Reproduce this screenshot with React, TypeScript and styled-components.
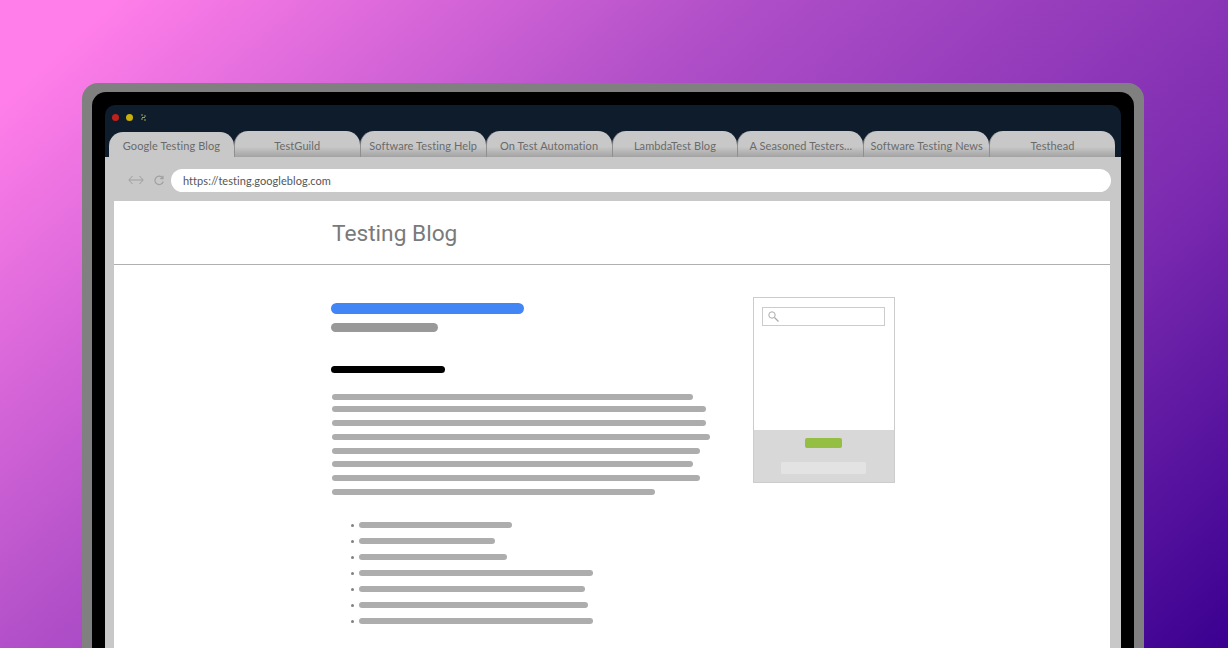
import React from 'react';
import styled, { createGlobalStyle } from 'styled-components';

// types
type BarProps = {
    $width: number;
};

type TabProps = {
    $active?: boolean;
};

// data
const TABS = [
    'Google Testing Blog',
    'TestGuild',
    'Software Testing Help',
    'On Test Automation',
    'LambdaTest Blog',
    'A Seasoned Testers...',
    'Software Testing News',
    'Testhead'
];

const PARAGRAPH = [
    { width: 361, top: 0 },
    { width: 374, top: 6 },
    { width: 374, top: 8 },
    { width: 378, top: 8 },
    { width: 368, top: 8 },
    { width: 361, top: 7 },
    { width: 368, top: 8 },
    { width: 323, top: 8 }
];

const LIST = [153, 136, 148, 234, 226, 229, 234];

// global
const GlobalStyle = createGlobalStyle`
    html, body {
        margin: 0;
        padding: 0;
        height: 648px;
        overflow: hidden;
    }

    body {
        background: linear-gradient(138deg, #ff7ee9 6%, #b04fc8 38%, #7c2bb0 72%, #3a0090 100%);
    }
`;

// local components
const Page = styled.div`
    width: 1228px;
    height: 648px;
    padding: 83px 84px 0 82px;
    box-sizing: border-box;
    overflow: hidden;
`;

const Laptop = styled.div`
    height: 640px;
    box-sizing: border-box;
    padding: 9px 10px 0;
    background: #808080;
    border-radius: 16px 16px 0 0;
`;

const Bezel = styled.div`
    height: 100%;
    box-sizing: border-box;
    padding: 13px 13px 0;
    background: #000;
    border-radius: 14px 14px 0 0;
`;

const Screen = styled.div`
    height: 100%;
    display: flex;
    flex-direction: column;
    background: #0f1c2b;
    border-radius: 10px 10px 0 0;
    overflow: hidden;
`;

const TitleBar = styled.div`
    height: 26px;
    box-sizing: border-box;
    display: flex;
    align-items: center;
    gap: 7px;
    padding: 0 0 1px 7px;
`;

const Dot = styled.span<{ $color: string }>`
    width: 7px;
    height: 7px;
    border-radius: 50%;
    background: ${(p) => p.$color};
`;

const TabRow = styled.div`
    display: flex;
    align-items: flex-end;
    height: 26px;
    padding: 0 6px 0 4px;
`;

const Tab = styled.div<TabProps>`
    flex: 1;
    height: ${(p) => (p.$active ? '25px' : '26px')};
    display: flex;
    align-items: center;
    justify-content: center;
    padding-top: ${(p) => (p.$active ? '1px' : '2px')};
    box-sizing: border-box;
    border-radius: 14px 14px 0 0;
    background: ${(p) =>
        p.$active ? '#c8c8c8' : 'linear-gradient(#c8c8c8 60%, #a3a3a3 100%)'};
    border-left: ${(p) => (p.$active ? '0' : '1px solid #8f8f8f')};
    font-family: 'Lato', sans-serif;
    font-size: 11px;
    letter-spacing: 0.1px;
    color: #6a6a6a;
    white-space: nowrap;
`;

const Toolbar = styled.div`
    height: 44px;
    flex: none;
    display: flex;
    align-items: center;
    padding: 2px 10px 0 23px;
    box-sizing: border-box;
    background: #c8c8c8;
`;

const NavIcons = styled.div`
    display: flex;
    align-items: center;
    gap: 10px;
    margin-right: 7px;
`;

const UrlBar = styled.div`
    flex: 1;
    height: 23px;
    display: flex;
    align-items: center;
    padding-left: 12px;
    background: #fff;
    border-radius: 12px;
    font-family: 'Lato', sans-serif;
    font-size: 11px;
    letter-spacing: 0.05px;
    color: #555;
`;

const Viewport = styled.div`
    flex: 1;
    padding: 0 11px 0 9px;
    background: #c8c8c8;
`;

const Content = styled.div`
    height: 100%;
    background: #fff;
`;

const BlogHeader = styled.header`
    height: 64px;
    box-sizing: border-box;
    padding: 18px 0 0 218px;
    border-bottom: 1px solid #b0b0b0;
    font-family: 'Roboto', sans-serif;
    font-size: 22.7px;
    line-height: 30px;
    color: #7a7a7a;
`;

const Main = styled.main`
    display: flex;
    align-items: flex-start;
    padding: 32px 0 0 217px;
`;

const Article = styled.article`
    width: 422px;
    padding-top: 6px;
`;

const Bar = styled.div<BarProps>`
    width: ${(p) => p.$width}px;
    border-radius: 5.5px;
`;

const PostTitle = styled(Bar)`
    height: 11px;
    background: #4285f4;
`;

const PostDate = styled(Bar)`
    height: 9px;
    margin-top: 9px;
    background: #999;
`;

const PostHeading = styled(Bar)`
    height: 7px;
    margin-top: 34px;
    background: #000;
`;

const Paragraph = styled.div`
    margin-top: 21px;
    padding-left: 1px;
`;

const TextLine = styled(Bar)<{ $top: number }>`
    height: 6px;
    margin-top: ${(p) => p.$top}px;
    background: #adadad;
`;

const List = styled.ul`
    list-style: none;
    margin: 27px 0 0;
    padding: 0 0 0 20px;
    display: flex;
    flex-direction: column;
    gap: 10px;
`;

const ListItem = styled.li`
    display: flex;
    align-items: center;
    gap: 5px;
    height: 6px;
`;

const Bullet = styled.span`
    width: 3px;
    height: 3px;
    border-radius: 50%;
    background: #808080;
`;

const ListLine = styled(Bar)`
    height: 6px;
    background: #adadad;
`;

const Sidebar = styled.aside`
    width: 142px;
    height: 186px;
    box-sizing: border-box;
    display: flex;
    flex-direction: column;
    border: 1px solid #ccc;
`;

const SearchArea = styled.div`
    flex: 1;
    padding: 9px 9px 0 8px;
`;

const SearchBox = styled.div`
    height: 19px;
    box-sizing: border-box;
    display: flex;
    align-items: center;
    padding-left: 5px;
    border: 1px solid #ccc;
`;

const SidebarFooter = styled.div`
    height: 52px;
    display: flex;
    flex-direction: column;
    align-items: center;
    padding: 8px 1px 0 0;
    box-sizing: border-box;
    background: #d8d8d8;
`;

const SubscribeButton = styled.div`
    width: 37px;
    height: 10px;
    border-radius: 2px;
    background: #94bf42;
`;

const SubscribeLabel = styled.div`
    width: 85px;
    height: 12px;
    margin-top: 14px;
    border-radius: 1px;
    background: #e3e3e3;
`;

// export
export default () => (
    <Page>
        <GlobalStyle />
        <Laptop>
            <Bezel>
                <Screen>
                    <TitleBar>
                        <Dot $color='#c0201a' />
                        <Dot $color='#c9ae0c' />
                        <svg width='7' height='7' viewBox='0 0 7 7'>
                            <path
                                d='M1 .5h2v1H1zM4 1.5h2v1H4zM2 3h3v1H2zM1 4.5h2v1H1zM4 5.5h2v1H4z'
                                fill='#9aa843'
                            />
                        </svg>
                    </TitleBar>
                    <TabRow>
                        {TABS.map((tab, i) => (
                            <Tab key={tab} $active={i === 0}>
                                {tab}
                            </Tab>
                        ))}
                    </TabRow>
                    <Toolbar>
                        <NavIcons>
                            <svg width='16' height='10' viewBox='0 0 16 10' fill='none' stroke='#9e9e9e' strokeWidth='1'>
                                <path d='M4.5 1L.8 5l3.7 4M11.5 1l3.7 4-3.7 4M1 5h14' />
                            </svg>
                            <svg width='10' height='11' viewBox='0 0 10 11' fill='none' stroke='#a0a0a0' strokeWidth='1.2'>
                                <path d='M8.6 3A4.2 4.2 0 1 0 9.2 6.5M9 .8v2.8H6.2' />
                            </svg>
                        </NavIcons>
                        <UrlBar>https://testing.googleblog.com</UrlBar>
                    </Toolbar>
                    <Viewport>
                        <Content>
                            <BlogHeader>Testing Blog</BlogHeader>
                            <Main>
                                <Article>
                                    <PostTitle $width={193} />
                                    <PostDate $width={107} />
                                    <PostHeading $width={114} />
                                    <Paragraph>
                                        {PARAGRAPH.map((line, i) => (
                                            <TextLine key={i} $width={line.width} $top={line.top} />
                                        ))}
                                    </Paragraph>
                                    <List>
                                        {LIST.map((width, i) => (
                                            <ListItem key={i}>
                                                <Bullet />
                                                <ListLine $width={width} />
                                            </ListItem>
                                        ))}
                                    </List>
                                </Article>
                                <Sidebar>
                                    <SearchArea>
                                        <SearchBox>
                                            <svg width='11' height='11' viewBox='0 0 11 11' fill='none' stroke='#aaa'>
                                                <circle cx='4' cy='4' r='3.2' />
                                                <path d='M6.5 6.5L10.5 10.5' strokeWidth='1.2' />
                                            </svg>
                                        </SearchBox>
                                    </SearchArea>
                                    <SidebarFooter>
                                        <SubscribeButton />
                                        <SubscribeLabel />
                                    </SidebarFooter>
                                </Sidebar>
                            </Main>
                        </Content>
                    </Viewport>
                </Screen>
            </Bezel>
        </Laptop>
    </Page>
);
